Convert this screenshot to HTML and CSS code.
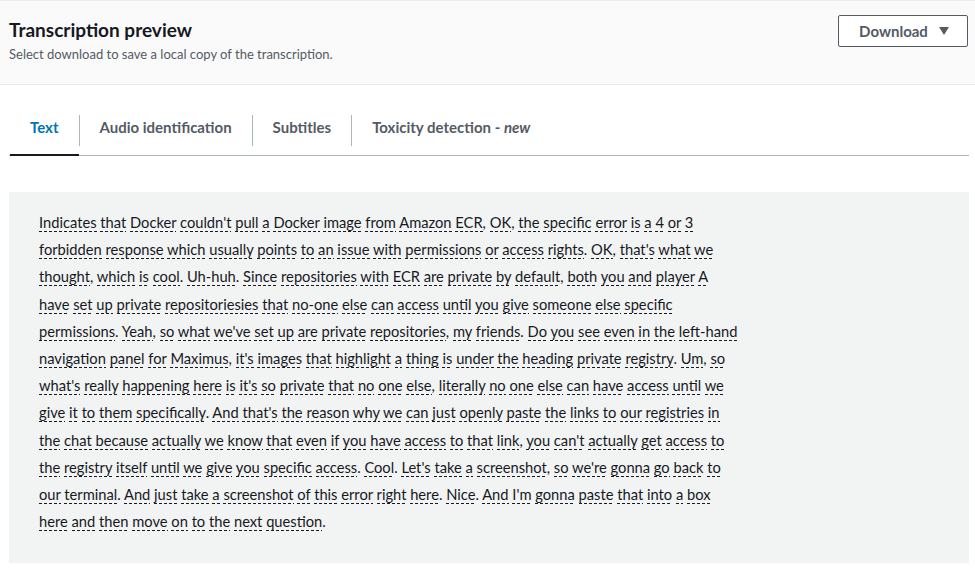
FILE: index.html
```html
<!DOCTYPE html>
<html lang="en">
<head>
<meta charset="utf-8">
<title>Transcription preview</title>
<link rel="stylesheet" href="styles.css">
</head>
<body>
<header class="header">
  <div class="header-text">
    <h1 class="title">Transcription preview</h1>
    <p class="subtitle">Select download to save a local copy of the transcription.</p>
  </div>
  <button class="download" type="button">Download <span class="caret"></span></button>
</header>
<main class="content">
  <ul class="tabs">
    <li class="tab active"><span class="tab-label">Text</span></li>
    <li class="tab"><span class="tab-label">Audio identification</span></li>
    <li class="tab"><span class="tab-label">Subtitles</span></li>
    <li class="tab"><span class="tab-label">Toxicity detection - <em>new</em></span></li>
  </ul>
  <section class="panel">
    <p class="transcript">
<span class="w">Indicates</span> <span class="w">that</span> <span class="w">Docker</span> <span class="w">couldn't</span> <span class="w">pull</span> <span class="w">a</span> <span class="w">Docker</span> <span class="w">image</span> <span class="w">from</span> <span class="w">Amazon</span> <span class="w">ECR</span>, <span class="w">OK</span>, <span class="w">the</span> <span class="w">specific</span> <span class="w">error</span> <span class="w">is</span> <span class="w">a</span> <span class="w">4</span> <span class="w">or</span> <span class="w">3</span><br>
<span class="w">forbidden</span> <span class="w">response</span> <span class="w">which</span> <span class="w">usually</span> <span class="w">points</span> <span class="w">to</span> <span class="w">an</span> <span class="w">issue</span> <span class="w">with</span> <span class="w">permissions</span> <span class="w">or</span> <span class="w">access</span> <span class="w">rights</span>. <span class="w">OK</span>, <span class="w">that's</span> <span class="w">what</span> <span class="w">we</span><br>
<span class="w">thought</span>, <span class="w">which</span> <span class="w">is</span> <span class="w">cool</span>. <span class="w">Uh-huh</span>. <span class="w">Since</span> <span class="w">repositories</span> <span class="w">with</span> <span class="w">ECR</span> <span class="w">are</span> <span class="w">private</span> <span class="w">by</span> <span class="w">default</span>, <span class="w">both</span> <span class="w">you</span> <span class="w">and</span> <span class="w">player</span> <span class="w">A</span><br>
<span class="w">have</span> <span class="w">set</span> <span class="w">up</span> <span class="w">private</span> <span class="w">repositoriesies</span> <span class="w">that</span> <span class="w">no-one</span> <span class="w">else</span> <span class="w">can</span> <span class="w">access</span> <span class="w">until</span> <span class="w">you</span> <span class="w">give</span> <span class="w">someone</span> <span class="w">else</span> <span class="w">specific</span><br>
<span class="w">permissions</span>. <span class="w">Yeah</span>, <span class="w">so</span> <span class="w">what</span> <span class="w">we've</span> <span class="w">set</span> <span class="w">up</span> <span class="w">are</span> <span class="w">private</span> <span class="w">repositories</span>, <span class="w">my</span> <span class="w">friends</span>. <span class="w">Do</span> <span class="w">you</span> <span class="w">see</span> <span class="w">even</span> <span class="w">in</span> <span class="w">the</span> <span class="w">left-hand</span><br>
<span class="w">navigation</span> <span class="w">panel</span> <span class="w">for</span> <span class="w">Maximus</span>, <span class="w">it's</span> <span class="w">images</span> <span class="w">that</span> <span class="w">highlight</span> <span class="w">a</span> <span class="w">thing</span> <span class="w">is</span> <span class="w">under</span> <span class="w">the</span> <span class="w">heading</span> <span class="w">private</span> <span class="w">registry</span>. <span class="w">Um</span>, <span class="w">so</span><br>
<span class="w">what's</span> <span class="w">really</span> <span class="w">happening</span> <span class="w">here</span> <span class="w">is</span> <span class="w">it's</span> <span class="w">so</span> <span class="w">private</span> <span class="w">that</span> <span class="w">no</span> <span class="w">one</span> <span class="w">else</span>, <span class="w">literally</span> <span class="w">no</span> <span class="w">one</span> <span class="w">else</span> <span class="w">can</span> <span class="w">have</span> <span class="w">access</span> <span class="w">until</span> <span class="w">we</span><br>
<span class="w">give</span> <span class="w">it</span> <span class="w">to</span> <span class="w">them</span> <span class="w">specifically</span>. <span class="w">And</span> <span class="w">that's</span> <span class="w">the</span> <span class="w">reason</span> <span class="w">why</span> <span class="w">we</span> <span class="w">can</span> <span class="w">just</span> <span class="w">openly</span> <span class="w">paste</span> <span class="w">the</span> <span class="w">links</span> <span class="w">to</span> <span class="w">our</span> <span class="w">registries</span> <span class="w">in</span><br>
<span class="w">the</span> <span class="w">chat</span> <span class="w">because</span> <span class="w">actually</span> <span class="w">we</span> <span class="w">know</span> <span class="w">that</span> <span class="w">even</span> <span class="w">if</span> <span class="w">you</span> <span class="w">have</span> <span class="w">access</span> <span class="w">to</span> <span class="w">that</span> <span class="w">link</span>, <span class="w">you</span> <span class="w">can't</span> <span class="w">actually</span> <span class="w">get</span> <span class="w">access</span> <span class="w">to</span><br>
<span class="w">the</span> <span class="w">registry</span> <span class="w">itself</span> <span class="w">until</span> <span class="w">we</span> <span class="w">give</span> <span class="w">you</span> <span class="w">specific</span> <span class="w">access</span>. <span class="w">Cool</span>. <span class="w">Let's</span> <span class="w">take</span> <span class="w">a</span> <span class="w">screenshot</span>, <span class="w">so</span> <span class="w">we're</span> <span class="w">gonna</span> <span class="w">go</span> <span class="w">back</span> <span class="w">to</span><br>
<span class="w">our</span> <span class="w">terminal</span>. <span class="w">And</span> <span class="w">just</span> <span class="w">take</span> <span class="w">a</span> <span class="w">screenshot</span> <span class="w">of</span> <span class="w">this</span> <span class="w">error</span> <span class="w">right</span> <span class="w">here</span>. <span class="w">Nice</span>. <span class="w">And</span> <span class="w">I'm</span> <span class="w">gonna</span> <span class="w">paste</span> <span class="w">that</span> <span class="w">into</span> <span class="w">a</span> <span class="w">box</span><br>
<span class="w">here</span> <span class="w">and</span> <span class="w">then</span> <span class="w">move</span> <span class="w">on</span> <span class="w">to</span> <span class="w">the</span> <span class="w">next</span> <span class="w">question</span>.
    </p>
  </section>
</main>
</body>
</html>
```
FILE: styles.css
```css
* { box-sizing: border-box; }
html, body { margin: 0; padding: 0; background: #ffffff; }
body {
  font-family: Lato, "Open Sans", sans-serif;
  color: #16191f;
  width: 975px;
}
.header {
  display: flex;
  justify-content: space-between;
  align-items: flex-start;
  background: #fafafa;
  border-top: 1px solid #eaeded;
  border-bottom: 1px solid #eaeded;
  height: 85px;
  padding: 14px 7px 0 9px;
}
.title {
  margin: 3px 0 0;
  font-size: 19px;
  font-weight: 700;
  line-height: 24px;
  color: #16191f;
}
.subtitle {
  margin: 4px 0 0;
  font-size: 13px;
  line-height: 16px;
  color: #545b64;
}
.download {
  display: flex;
  align-items: center;
  justify-content: center;
  gap: 11px;
  width: 130px;
  height: 32px;
  padding: 0 0 1px 2px;
  background: #ffffff;
  border: 1px solid #545b64;
  border-radius: 2px;
  font-family: inherit;
  font-size: 15px;
  font-weight: 700;
  color: #545b64;
}
.caret {
  width: 0;
  height: 0;
  border-left: 5.5px solid transparent;
  border-right: 5.5px solid transparent;
  border-top: 8px solid #545b64;
}
.content {
  padding: 0 6px 0 9px;
}
.tabs {
  display: flex;
  list-style: none;
  margin: 22px 0 0;
  padding: 0 0 0 1px;
  border-bottom: 1px solid #aab7b8;
}
.tab {
  padding: 8px 0;
  border-bottom: 2px solid transparent;
  margin-bottom: -1px;
}
.tab + .tab .tab-label { border-left: 1px solid #aab7b8; }
.tab.active { border-bottom-color: #16191f; }
.tab-label {
  display: block;
  height: 31px;
  line-height: 25px;
  padding: 0 20px 6px;
  font-size: 15px;
  font-weight: 700;
  color: #545b64;
}
.tab.active .tab-label { color: #0073bb; }
.tab-label em { font-style: italic; }
.panel {
  margin-top: 36px;
  background: #f2f3f3;
  padding: 17px 30px 30px;
  height: 371px;
}
.transcript {
  margin: 0;
  font-size: 14.7px;
  line-height: 27.2px;
  color: #16191f;
}
.w {
  padding-bottom: 1px;
  background-image: repeating-linear-gradient(to right, #16191f 0 3px, transparent 3px 5px);
  background-size: 100% 1px;
  background-position: left bottom;
  background-repeat: no-repeat;
}
```
